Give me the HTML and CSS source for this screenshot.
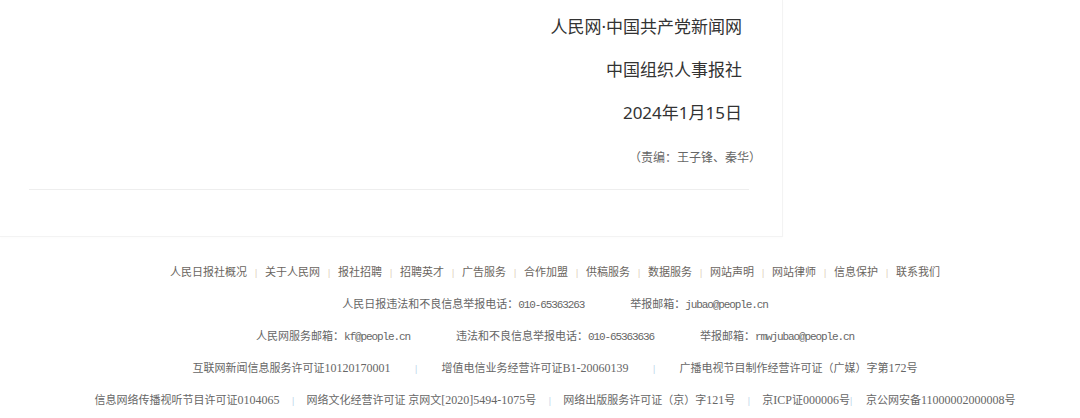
FILE: index.html
```html
<!DOCTYPE html>
<html lang="zh-CN">
<head>
<meta charset="utf-8">
<title>人民网</title>
<link rel="stylesheet" href="styles.css">
</head>
<body>
<div class="page">
  <section class="article">
    <div class="article-inner">
      <p class="src">人民网·中国共产党新闻网</p>
      <p class="src">中国组织人事报社</p>
      <p class="src">2024年1月15日</p>
      <p class="editor">（责编：王子锋、秦华）</p>
      <div class="rule"></div>
    </div>
  </section>
  <footer class="footer">
    <div class="line nav">
      <span>人民日报社概况</span><span class="sep">|</span><span>关于人民网</span><span class="sep">|</span><span>报社招聘</span><span class="sep">|</span><span>招聘英才</span><span class="sep">|</span><span>广告服务</span><span class="sep">|</span><span>合作加盟</span><span class="sep">|</span><span>供稿服务</span><span class="sep">|</span><span>数据服务</span><span class="sep">|</span><span>网站声明</span><span class="sep">|</span><span>网站律师</span><span class="sep">|</span><span>信息保护</span><span class="sep">|</span><span>联系我们</span>
    </div>
    <div class="line">
      <span>人民日报违法和不良信息举报电话：<span class="mono">010-65363263</span></span><span class="gap">举报邮箱：<span class="mono">jubao@people.cn</span></span>
    </div>
    <div class="line">
      <span>人民网服务邮箱：<span class="mono">kf@people.cn</span></span><span class="gap">违法和不良信息举报电话：<span class="mono">010-65363636</span></span><span class="gap">举报邮箱：<span class="mono">rmwjubao@people.cn</span></span>
    </div>
    <div class="line">
      <span>互联网新闻信息服务许可证<span class="num">10120170001</span></span><span class="bar wide">|</span><span>增值电信业务经营许可证<span class="num">B1-20060139</span></span><span class="bar wide">|</span><span>广播电视节目制作经营许可证（广媒）字第<span class="num">172</span>号</span>
    </div>
    <div class="line">
      <span>信息网络传播视听节目许可证<span class="num">0104065</span></span><span class="bar">|</span><span>网络文化经营许可证 京网文<span class="num">[2020]5494-1075</span>号</span><span class="bar">|</span><span>网络出版服务许可证（京）字<span class="num">121</span>号</span><span class="bar">|</span><span>京<span class="num">ICP</span>证<span class="num">000006</span>号<span class="bar tight">|</span></span><span>京公网安备<span class="num">11000002000008</span>号</span>
    </div>
  </footer>
</div>
</body>
</html>
```

FILE: styles.css
```css
html, body {
  margin: 0;
  padding: 0;
  background: #ffffff;
}

.page {
  width: 1080px;
}

.article {
  width: 782px;
  border-right: 1px solid #f3f3f3;
  border-bottom: 1px solid #f3f3f3;
  box-shadow: 0 1px 2px rgba(0, 0, 0, 0.015);
}

.article-inner {
  margin-left: 29px;
  width: 720px;
  padding-top: 13px;
  padding-bottom: 46px;
}

.src {
  margin: 0 0 15px 0;
  padding-right: 7px;
  text-align: right;
  font-family: "Noto Sans", "Noto Sans CJK SC", sans-serif;
  font-size: 17px;
  line-height: 28px;
  color: #333333;
}

.editor {
  margin: 0 -12px 15px 0;
  text-align: right;
  font-family: "Liberation Serif", "Noto Sans CJK SC", serif;
  font-size: 12px;
  line-height: 32px;
  color: #666666;
}

.rule {
  height: 1px;
  background: #eeeeee;
}

.footer {
  padding: 19px 0 0 30px;
  text-align: center;
  font-family: "Liberation Serif", "Noto Sans CJK SC", serif;
  font-size: 11px;
  color: #666666;
}

.line {
  line-height: 32px;
  height: 32px;
  white-space: nowrap;
}

.nav {
  color: #6a6560;
}

.sep {
  display: inline-block;
  width: 18px;
  text-align: center;
  color: #d6c09f;
}

.mono {
  font-family: "Liberation Mono", monospace;
  font-size: 11px;
  letter-spacing: -1.1px;
}

.num {
  font-size: 12px;
}

.gap {
  margin-left: 46px;
}

.bar {
  display: inline-block;
  width: 27px;
  text-align: center;
  color: #a9c9e4;
}

.bar.wide {
  width: 51px;
}

.bar.tight {
  width: 16px;
  text-align: left;
}
```
